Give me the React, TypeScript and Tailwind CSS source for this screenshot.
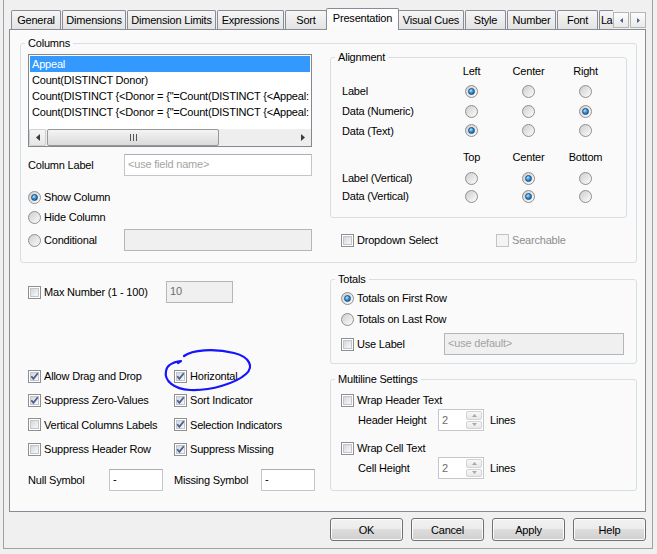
import React from "react";

type P = { children?: React.ReactNode; className?: string };

function Check({ checked = false, disabled = false }: { checked?: boolean; disabled?: boolean }) {
  return (
    <span
      className={`relative flex h-[13px] w-[13px] shrink-0 items-center justify-center border ${
        disabled ? "border-[#c3c3c3] bg-[#f4f4f4]" : "border-[#8e8f8f] bg-white"
      }`}
    >
      {!disabled && (
        <span className="h-[9px] w-[9px] border border-[#c2c6cc] bg-[linear-gradient(135deg,#d3d7dd,#f8f8f8)]" />
      )}
      {checked && (
        <svg className="absolute left-0 top-0" width="11" height="11" viewBox="0 0 11 11">
          <path d="M2.3 5.2 L4.4 7.8 L8.8 2.2" fill="none" stroke="#4b5f92" strokeWidth="1.8" />
        </svg>
      )}
    </span>
  );
}

function Radio({ checked = false }: { checked?: boolean }) {
  return (
    <span className="flex h-[13px] w-[13px] shrink-0 items-center justify-center rounded-full border border-[#8f8f8f] bg-[linear-gradient(135deg,#cdcdcd,#fdfdfd)]">
      {checked && (
        <span className="h-[7px] w-[7px] rounded-full border border-[#1b4a7a] bg-[radial-gradient(circle_at_35%_30%,#b5e6ff_0%,#3797e0_45%,#0b4d8f_100%)]" />
      )}
    </span>
  );
}

function Opt({
  control,
  children,
  className = "",
  disabled = false,
}: {
  control: React.ReactNode;
  children: React.ReactNode;
  className?: string;
  disabled?: boolean;
}) {
  return (
    <div className={`flex items-center gap-[3px] ${className}`}>
      {control}
      <span className={disabled ? "text-[#8d8d8d]" : ""}>{children}</span>
    </div>
  );
}

function Box({
  className = "",
  children,
  disabled = false,
  faint = false,
}: {
  className?: string;
  children?: React.ReactNode;
  disabled?: boolean;
  faint?: boolean;
}) {
  return (
    <div
      className={`flex h-[22px] items-center overflow-hidden whitespace-nowrap border px-[3px] pb-[2px] ${
        disabled
          ? "border-[#b4b7ba] bg-[#f0f0f0]"
          : "border-[#c2c5ca] border-t-[#abadb3] bg-white"
      } ${faint ? "text-[#a3a3a3]" : disabled ? "text-[#6d6d6d]" : ""} ${className}`}
    >
      {children}
    </div>
  );
}

function Spin() {
  return (
    <div className="flex h-[22px] w-[46px] border border-[#c4c7cc] bg-white">
      <span className="flex-1 pl-[3px] pt-[3px] text-[#6d6d6d]">2</span>
      <div className="my-[1px] mr-[1px] flex w-[16px] flex-col gap-[1px]">
        <div className="flex flex-1 items-center justify-center rounded-[2px] border border-[#d2d2d2] bg-[linear-gradient(#f8f8f8,#e8e8e8)]">
          <svg width="5" height="3" viewBox="0 0 5 3">
            <path d="M0 3 L2.5 0 L5 3Z" fill="#a8a8a8" />
          </svg>
        </div>
        <div className="flex flex-1 items-center justify-center rounded-[2px] border border-[#d2d2d2] bg-[linear-gradient(#f8f8f8,#e8e8e8)]">
          <svg width="5" height="3" viewBox="0 0 5 3">
            <path d="M0 0 L2.5 3 L5 0Z" fill="#a8a8a8" />
          </svg>
        </div>
      </div>
    </div>
  );
}

function Btn({ children }: P) {
  return (
    <div className="flex h-[23px] w-[73px] items-center justify-center rounded-[3px] border border-[#707070] bg-[linear-gradient(#f2f2f2_0%,#ebebeb_50%,#dddddd_50%,#cfcfcf_100%)] shadow-[inset_0_0_0_1px_#fbfbfb]">
      {children}
    </div>
  );
}

function Tab({ children, className = "" }: P) {
  return (
    <div
      className={`flex h-[19px] shrink-0 items-start justify-center overflow-hidden whitespace-nowrap rounded-t-[2px] border border-b-0 border-[#898c95] bg-[linear-gradient(#f6f6f6,#e3e3e3)] pt-[2px] ${className}`}
    >
      {children}
    </div>
  );
}

function Group({ title, children, className = "" }: { title: string; children: React.ReactNode; className?: string }) {
  return (
    <fieldset className={`rounded-[3px] border border-[#d5dfe5] ${className}`}>
      <legend className="ml-[4px] px-[3px] leading-[14px]">{title}</legend>
      {children}
    </fieldset>
  );
}

const AL = "grid grid-cols-[101px_57px_57px_57px] items-center";

function RadioRow({ label, sel, h }: { label: string; sel: number; h: string }) {
  return (
    <div className={`${AL} ${h}`}>
      <span>{label}</span>
      {[0, 1, 2].map((i) => (
        <div key={i} className="flex justify-center">
          <Radio checked={i === sel} />
        </div>
      ))}
    </div>
  );
}

const longExpr = 'Count(DISTINCT {<Donor = {"=Count(DISTINCT {<Appeal:';

export default function App() {
  return (
    <div className="relative h-[554px] w-[657px] overflow-hidden bg-[#f0f0f0] pl-[3px] pr-[4px] font-['Liberation_Sans',Arial,sans-serif] text-[11px] leading-[14px] tracking-[-0.2px] text-black">
      <div className="flex h-[549px] flex-col border-x border-b border-[#a0a0a0] pl-[5px] pr-[6px]">
        {/* Tab strip */}
        <div className="relative z-10 flex h-[29px] items-end pl-[2px]">
          <Tab className="w-[50px]">General</Tab>
          <Tab className="ml-[1px] w-[64px]">Dimensions</Tab>
          <Tab className="ml-[1px] w-[89px]">Dimension Limits</Tab>
          <Tab className="ml-[1px] w-[67px]">Expressions</Tab>
          <Tab className="ml-[1px] w-[42px]">Sort</Tab>
          <div className="relative z-10 -mb-px -ml-px flex h-[22px] w-[73px] shrink-0 items-start justify-center rounded-t-[2px] border border-b-0 border-[#898c95] bg-[linear-gradient(#ffffff,#fafafa)] pt-[2px]">
            Presentation
          </div>
          <Tab className="-ml-px w-[66px]">Visual Cues</Tab>
          <Tab className="ml-[1px] w-[41px]">Style</Tab>
          <Tab className="ml-[1px] w-[49px]">Number</Tab>
          <Tab className="ml-[1px] w-[41px]">Font</Tab>
          <div className="ml-[1px] flex h-[19px] w-[14px] shrink-0 items-start whitespace-nowrap rounded-tl-[2px] border-l border-t border-[#898c95] bg-[linear-gradient(#f6f6f6,#e3e3e3)] pl-[1px] pt-[2px] tracking-[-0.5px]">
            La
          </div>
          <div className="mb-[1px] ml-auto flex h-[16px] gap-[1px]">
            <div className="flex w-[16px] items-center justify-center border border-[#b5b5b5] bg-[linear-gradient(#fdfdfd,#e9e9e9)]">
              <svg width="3" height="5" viewBox="0 0 3 5">
                <path d="M3 0 L0 2.5 L3 5Z" fill="#4a5f8a" />
              </svg>
            </div>
            <div className="flex w-[16px] items-center justify-center border border-[#b5b5b5] bg-[linear-gradient(#fdfdfd,#e9e9e9)]">
              <svg width="3" height="5" viewBox="0 0 3 5">
                <path d="M0 0 L3 2.5 L0 5Z" fill="#4a5f8a" />
              </svg>
            </div>
          </div>
        </div>

        {/* Panel */}
        <div className="h-[483px] border border-[#898c95] bg-[#fafafa] pl-[10px] pr-[8px] pt-[6px]">
          <Group title="Columns">
            <div className="grid grid-cols-[284px_297px] gap-x-[18px] pb-[11px] pl-[7px] pr-[9px]">
              {/* left column */}
              <div className="flex flex-col">
                <div className="mt-[4px] flex h-[93px] flex-col overflow-hidden border border-[#828790] bg-white">
                  <div className="mx-[1px] mt-[1px] h-[16px] whitespace-nowrap bg-[#3399ff] pl-[2px] leading-[16px] text-white">
                    Appeal
                  </div>
                  <div className="mx-[1px] h-[16px] overflow-hidden whitespace-nowrap pl-[2px] leading-[16px]">
                    Count(DISTINCT Donor)
                  </div>
                  <div className="mx-[1px] h-[16px] overflow-hidden whitespace-nowrap pl-[2px] leading-[16px]">
                    {longExpr}
                  </div>
                  <div className="mx-[1px] h-[16px] overflow-hidden whitespace-nowrap pl-[2px] leading-[16px]">
                    {longExpr}
                  </div>
                  <div className="flex-1" />
                  <div className="flex h-[17px] bg-[#eeeeee]">
                    <div className="flex w-[17px] items-center justify-center rounded-[2px] border border-[#d0d0d0] bg-[linear-gradient(#f6f6f6,#e6e6e6)]">
                      <svg width="4" height="7" viewBox="0 0 4 7">
                        <path d="M4 0 L0 3.5 L4 7Z" fill="#3d3d3d" />
                      </svg>
                    </div>
                    <div className="ml-[1px] flex w-[172px] items-center justify-center rounded-[2px] border border-[#979797] bg-[linear-gradient(#f4f4f4,#dadada)]">
                      <svg width="7" height="7" viewBox="0 0 7 7">
                        <path d="M0.5 0 V7 M3.5 0 V7 M6.5 0 V7" stroke="#555" strokeWidth="1" />
                      </svg>
                    </div>
                    <div className="flex-1" />
                    <div className="flex w-[17px] items-center justify-center">
                      <svg width="4" height="7" viewBox="0 0 4 7">
                        <path d="M0 0 L4 3.5 L0 7Z" fill="#3d3d3d" />
                      </svg>
                    </div>
                  </div>
                </div>
                <div className="mt-[7px] flex h-[22px] items-center">
                  <span className="w-[96px] shrink-0">Column Label</span>
                  <Box faint className="flex-1">
                    {"<use field name>"}
                  </Box>
                </div>
                <Opt className="mt-[13px] h-[16px]" control={<Radio checked />}>
                  Show Column
                </Opt>
                <Opt className="mt-[4px] h-[16px]" control={<Radio />}>
                  Hide Column
                </Opt>
                <div className="mt-[4px] flex h-[22px] items-center">
                  <Opt className="w-[96px] shrink-0" control={<Radio />}>
                    Conditional
                  </Opt>
                  <Box disabled className="flex-1" />
                </div>
              </div>

              {/* right column */}
              <div className="flex flex-col">
                <Group title="Alignment">
                  <div className="pb-[12px] pl-[11px]">
                    <div className={`${AL} h-[14px]`}>
                      <span />
                      <span className="text-center">Left</span>
                      <span className="text-center">Center</span>
                      <span className="text-center">Right</span>
                    </div>
                    <div className="mt-[3px]">
                      <RadioRow label="Label" sel={0} h="h-[20px]" />
                      <RadioRow label="Data (Numeric)" sel={2} h="h-[20px]" />
                      <RadioRow label="Data (Text)" sel={0} h="h-[19px]" />
                    </div>
                    <div className={`${AL} mt-[10px] h-[14px]`}>
                      <span />
                      <span className="text-center">Top</span>
                      <span className="text-center">Center</span>
                      <span className="text-center">Bottom</span>
                    </div>
                    <div className="mt-[5px]">
                      <RadioRow label="Label (Vertical)" sel={1} h="h-[18px]" />
                      <RadioRow label="Data (Vertical)" sel={1} h="h-[18px]" />
                    </div>
                  </div>
                </Group>
                <div className="mt-[14px] flex h-[16px] items-center pl-[11px]">
                  <Opt className="w-[155px] shrink-0" control={<Check />}>
                    Dropdown Select
                  </Opt>
                  <Opt control={<Check disabled />} disabled>
                    Searchable
                  </Opt>
                </div>
              </div>
            </div>
          </Group>

          {/* Bottom section */}
          <div className="mt-[9px] grid grid-cols-[310px_307px]">
            <div className="flex flex-col pl-[8px] pt-[9px]">
              <div className="flex h-[22px] items-center">
                <Opt className="w-[138px] shrink-0" control={<Check />}>
                  Max Number (1 - 100)
                </Opt>
                <Box disabled className="w-[67px]">
                  10
                </Box>
              </div>
              <div className="mt-[61px] flex flex-col">
                <div className="flex h-[24px] items-center">
                  <Opt className="w-[146px] shrink-0" control={<Check checked />}>
                    Allow Drag and Drop
                  </Opt>
                  <Opt control={<Check checked />}>Horizontal</Opt>
                </div>
                <div className="flex h-[24px] items-center">
                  <Opt className="w-[146px] shrink-0" control={<Check checked />}>
                    Suppress Zero-Values
                  </Opt>
                  <Opt control={<Check checked />}>Sort Indicator</Opt>
                </div>
                <div className="flex h-[25px] items-center">
                  <Opt className="w-[146px] shrink-0" control={<Check />}>
                    Vertical Columns Labels
                  </Opt>
                  <Opt control={<Check checked />}>Selection Indicators</Opt>
                </div>
                <div className="flex h-[24px] items-center">
                  <Opt className="w-[146px] shrink-0" control={<Check />}>
                    Suppress Header Row
                  </Opt>
                  <Opt control={<Check checked />}>Suppress Missing</Opt>
                </div>
              </div>
              <div className="mt-[8px] flex h-[22px] items-center">
                <div className="flex w-[146px] shrink-0 items-center">
                  <span className="w-[81px] shrink-0">Null Symbol</span>
                  <Box className="w-[54px]">-</Box>
                </div>
                <span className="w-[87px] shrink-0">Missing Symbol</span>
                <Box className="w-[54px]">-</Box>
              </div>
            </div>

            <div className="flex flex-col">
              <Group title="Totals">
                <div className="flex flex-col pb-[8px] pl-[10px]">
                  <Opt className="mt-[4px] h-[16px]" control={<Radio checked />}>
                    Totals on First Row
                  </Opt>
                  <Opt className="mt-[5px] h-[16px]" control={<Radio />}>
                    Totals on Last Row
                  </Opt>
                  <div className="mt-[6px] flex h-[22px] items-center">
                    <Opt className="w-[103px] shrink-0" control={<Check />}>
                      Use Label
                    </Opt>
                    <Box disabled faint className="w-[180px]">
                      {"<use default>"}
                    </Box>
                  </div>
                </div>
              </Group>
              <Group title="Multiline Settings" className="mt-[8px]">
                <div className="flex flex-col pb-[11px] pl-[10px]">
                  <Opt className="mt-[6px] h-[16px]" control={<Check />}>
                    Wrap Header Text
                  </Opt>
                  <div className="mt-[1px] flex h-[22px] items-center pl-[17px]">
                    <span className="w-[80px] shrink-0">Header Height</span>
                    <Spin />
                    <span className="ml-[6px]">Lines</span>
                  </div>
                  <Opt className="mt-[9px] h-[16px]" control={<Check />}>
                    Wrap Cell Text
                  </Opt>
                  <div className="mt-[1px] flex h-[22px] items-center pl-[17px]">
                    <span className="w-[80px] shrink-0">Cell Height</span>
                    <Spin />
                    <span className="ml-[6px]">Lines</span>
                  </div>
                </div>
              </Group>
            </div>
          </div>
        </div>

        {/* Buttons */}
        <div className="mt-[6px] flex justify-end gap-[8px]">
          <Btn>OK</Btn>
          <Btn>Cancel</Btn>
          <Btn>Apply</Btn>
          <Btn>Help</Btn>
        </div>
      </div>

      {/* hand-drawn annotation */}
      <svg className="pointer-events-none absolute left-0 top-0" width="657" height="554" viewBox="0 0 657 554">
        <path
          d="M184 356 C192 350 214 348 234 353 C250 357 254 367 246 374 C236 383 211 391 190 390 C174 389 164 381 166 371 C167 365 173 362 181 361 L178 363"
          fill="none"
          stroke="#1414ff"
          strokeWidth="2.2"
          strokeLinecap="round"
          strokeLinejoin="round"
        />
      </svg>
    </div>
  );
}
